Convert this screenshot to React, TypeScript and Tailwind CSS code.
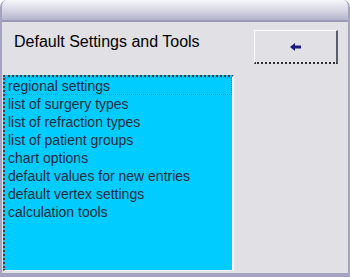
import React from "react";

const items = [
  "regional settings",
  "list of surgery types",
  "list of refraction types",
  "list of patient groups",
  "chart options",
  "default values for new entries",
  "default vertex settings",
  "calculation tools",
];

export default function App() {
  return (
    <div className="w-[350px] h-[277px] bg-[#e0e0e5] flex flex-col border-x-2 border-b-[4px] border-[#a4a4c0] rounded-t-[7px] overflow-hidden font-['Liberation_Sans',Arial,sans-serif]">
      <div className="h-[22px] shrink-0 bg-gradient-to-b from-[#f6f6fa] via-[#d8d8e6] to-[#b4b4cc] border-b-2 border-[#9a9ab8]" />
      <div className="flex-1 flex flex-col pl-[1px]">
        <div className="flex items-start h-[53px]">
          <div className="pl-[11px] pt-[11px] text-[16px] leading-[18px] text-black">Default Settings and Tools</div>
          <button className="ml-auto mr-[10px] mt-[8px] w-[84px] h-[34px] bg-[#e0e0e5] border-solid border-t border-l border-t-white border-l-white border-r-2 border-r-[#5c5c6c] border-b-2 border-b-[#303030] [border-bottom-style:dotted] flex items-center justify-center">
            <svg width="12" height="8" viewBox="0 0 12 8">
              <path d="M0 4 L5 0 L5 2.5 L11 2.5 L11 5.5 L5 5.5 L5 8 Z" fill="#1c1c80" />
            </svg>
          </button>
        </div>
        <div className="w-[231px] h-[196px] bg-[#00ccff] border-solid border-l-2 border-t-2 border-[#404050] [border-top-style:dotted] [border-left-style:dotted] border-r-2 border-r-[#f4f4f8] border-b border-b-[#f4f4f8]">
          {items.map((t, i) => (
            <div
              key={t}
              className={
                "h-[18px] pl-[2px] text-[14px] leading-[16px] text-[#28283c] border border-dotted " +
                (i === 0 ? "border-[#c05040]" : "border-transparent")
              }
            >
              {t}
            </div>
          ))}
        </div>
      </div>
    </div>
  );
}
